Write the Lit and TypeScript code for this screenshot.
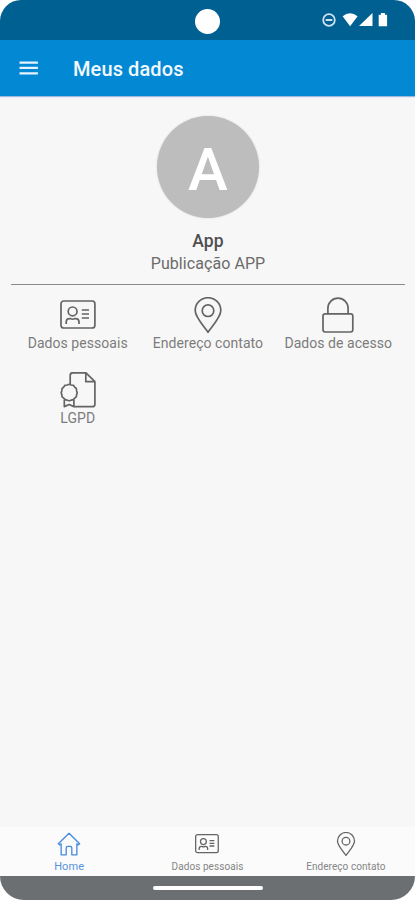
import { LitElement, html, css, svg } from "lit";
import { customElement } from "lit/decorators.js";

const idCard = svg`
  <rect x="1" y="4" width="33.9" height="27" rx="2.8"/>
  <circle cx="12.6" cy="14.4" r="4.4"/>
  <path d="M6.2 27v-1.9q0-3.5 3.4-3.5h.7q2.3 1.3 4.6 0h.7q3.4 0 3.4 3.5V27M21.8 13H29M21.8 17H29M21.8 21H29"/>`;
const pin = svg`
  <path d="M18 35.2C14.2 29.3 5.2 20.5 5.2 13.5a12.8 12.8 0 0 1 25.6 0C30.8 20.5 21.8 29.3 18 35.2Z"/>
  <circle cx="18" cy="13.7" r="5.8"/>`;
const lock = svg`
  <rect x="3" y="16.8" width="29.8" height="18.2" rx="2.2"/>
  <path d="M7.9 16.8V11.2a10.1 10.1 0 0 1 20.2 0v5.6"/>`;
const certificate = svg`
  <path d="M10.2 12.2V3.4q0-2.6 2.6-2.6h13.2l8.9 8.9v22.5q0 2.5-2.5 2.5H14.2M25.8.8v8.9h9.1"/>
  <path d="M9.2 12.3l2 .7 2.2.3 1.3 1.8 1.6 1.4.3 2.2.6 2-.6 2-.3 2.2-1.6 1.3-1.4 1.5-2.1.5-2 .6-2-.6-2.1-.5-1.4-1.5-1.6-1.3-.3-2.2-.6-2 .6-2 .3-2.2 1.6-1.4 1.3-1.8 2.2-.3z"/>
  <path d="M4.3 27.7v6.9l4.8-2.1 4.8 2.1v-6.9"/>`;
const home = svg`
  <path d="M2 17.5 18 2 34 17.5l-2 1.8-2.2-1.6v16.5h-7.6V24q0-2.5-2.2-2.5h-4q-2.2 0-2.2 2.5v10.2H6.2V17.7L4 19.3Z"/>`;

@customElement("app-root")
export class AppRoot extends LitElement {
  static styles = css`
    :host {
      display: flex;
      flex-direction: column;
      width: 415px;
      height: 900px;
      box-sizing: border-box;
      overflow: hidden;
      background: #f7f7f7;
      border-radius: 21px 21px 24px 24px;
      font-family: Roboto, "Liberation Sans", sans-serif;
      color: #6b6b6b;
      white-space: nowrap;
    }
    svg { display: block; flex: none; }
    .status {
      display: grid;
      grid-template-columns: 1fr 26px 1fr;
      align-items: center;
      height: 40px;
      flex: none;
      background: #006091;
    }
    .camera {
      grid-column: 2;
      width: 25px;
      height: 25px;
      margin: 3px 0 0 0.5px;
      border-radius: 50%;
      background: #fff;
    }
    .signals { justify-self: end; margin-right: 26px; }
    .bar {
      display: flex;
      align-items: center;
      height: 56px;
      flex: none;
      padding-left: 19px;
      background: #0389d3;
      box-shadow: 0 1px 1px #9db9df;
      color: #f3f9ff;
    }
    .title {
      margin: 2px 0 0 35px;
      font-size: 20px;
      font-weight: 500;
      letter-spacing: 0.1px;
    }
    main { flex: 1; padding: 20px 10px 0 11px; }
    .profile {
      display: flex;
      flex-direction: column;
      align-items: center;
      height: 168px;
      border-bottom: 1px solid #8b8b8b;
    }
    .avatar {
      display: grid;
      place-items: center;
      width: 102px;
      height: 102px;
      border-radius: 50%;
      background: #bdbdbd;
      box-shadow: 0 0 2px #d0d0d0;
      color: #fff;
      font-size: 60px;
      font-weight: 500;
      line-height: 102px;
    }
    .letter { padding-top: 3px; }
    .name {
      margin-top: 11px;
      font-size: 17.5px;
      font-weight: 500;
      line-height: 24px;
      letter-spacing: 0.2px;
      color: #4f4f4f;
    }
    .org { font-size: 16px; line-height: 22px; letter-spacing: 0.07px; }
    .grid {
      display: grid;
      grid-template-columns: repeat(3, 130.3px);
      grid-auto-rows: 75px;
      justify-content: center;
      padding-top: 12px;
    }
    .tile { display: flex; flex-direction: column; align-items: center; }
    .line {
      fill: none;
      stroke: #646464;
      stroke-width: 1.7;
      stroke-linejoin: round;
    }
    .label { font-size: 14px; line-height: 20px; letter-spacing: 0.05px; color: #7c7c7c; }
    .tabs {
      display: grid;
      grid-template-columns: repeat(3, 1fr);
      height: 49px;
      flex: none;
      background: #fbfbfb;
    }
    .tab {
      display: flex;
      flex-direction: column;
      align-items: center;
      padding-top: 5px;
      font-size: 10px;
      line-height: 14px;
      letter-spacing: 0.06px;
      color: #858585;
    }
    .tab svg { margin-bottom: 4px; }
    .tab .line { stroke-width: 1.9; }
    .active { color: #5794dc; font-size: 11px; letter-spacing: 0.1px; }
    .active .line { stroke: #468bdc; stroke-width: 2; }
    .system {
      display: flex;
      justify-content: center;
      align-items: center;
      height: 24px;
      flex: none;
      background: #6b6f71;
    }
    .handle { width: 110px; height: 4px; border-radius: 2px; background: #fff; }
  `;

  private tile(icon: unknown, text: string) {
    return html`<div class="tile">
      <svg class="line" width="36" height="36" viewBox="0 0 36 36">${icon}</svg>
      <span class="label">${text}</span>
    </div>`;
  }

  private tab(icon: unknown, text: string, active = false) {
    return html`<div class="tab ${active ? "active" : ""}">
      <svg class="line" width="24" height="24" viewBox="0 0 36 36">${icon}</svg>
      <span>${text}</span>
    </div>`;
  }

  render() {
    return html`
      <div class="status">
        <div class="camera"></div>
        <svg class="signals" width="68" height="16" viewBox="0 0 68 16" fill="#fff">
          <circle cx="8" cy="8" r="5.8" fill="none" stroke="#cfe3f5" stroke-width="1.8"/>
          <path d="M4.7 8h6.6" stroke="#cfe3f5" stroke-width="2"/>
          <path d="M21.6 4.3Q29-2 36.6 4.3L29.1 14.2ZM51.5 1v13H38ZM57.7 2.8h2.2V1h4v1.8h2.2V14.2h-8.4Z"/>
        </svg>
      </div>
      <header class="bar">
        <svg width="19" height="14" viewBox="0 0 19 14" fill="#e5f3ff">
          <path d="M.5 .4h18.4v2.3H.5zM.5 5.8h18.4v2.3H.5zM.5 11.2h18.4v2.3H.5z"/>
        </svg>
        <span class="title">Meus dados</span>
      </header>
      <main>
        <section class="profile">
          <div class="avatar"><span class="letter">A</span></div>
          <span class="name">App</span>
          <span class="org">Publicação APP</span>
        </section>
        <section class="grid">
          ${this.tile(idCard, "Dados pessoais")}
          ${this.tile(pin, "Endereço contato")}
          ${this.tile(lock, "Dados de acesso")}
          ${this.tile(certificate, "LGPD")}
        </section>
      </main>
      <nav class="tabs">
        ${this.tab(home, "Home", true)}
        ${this.tab(idCard, "Dados pessoais")}
        ${this.tab(pin, "Endereço contato")}
      </nav>
      <div class="system"><div class="handle"></div></div>
    `;
  }
}
